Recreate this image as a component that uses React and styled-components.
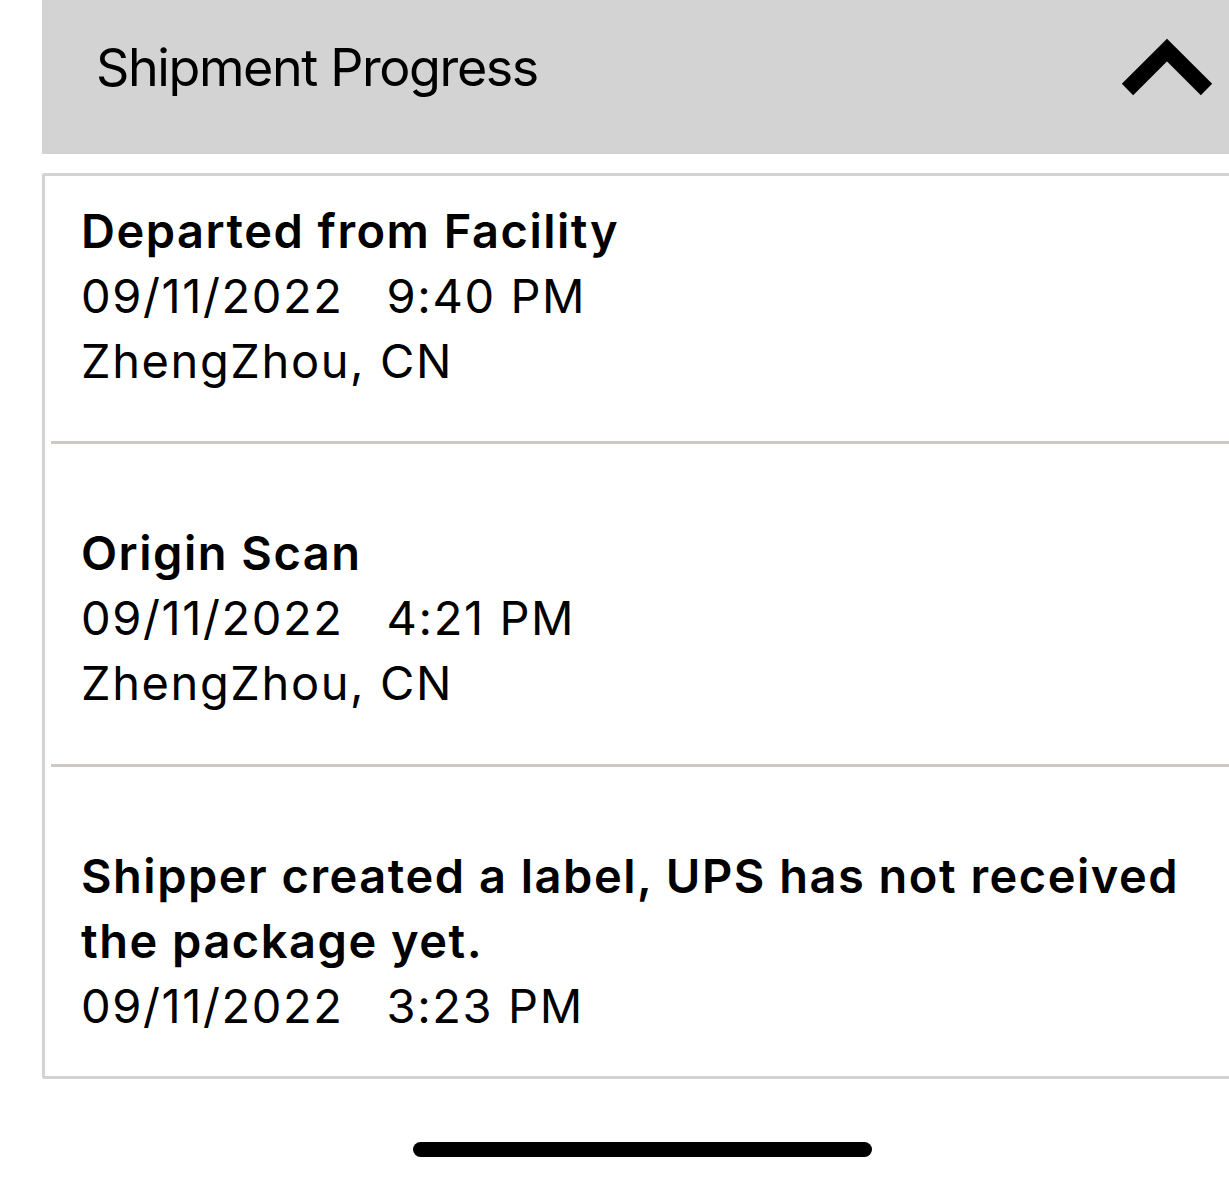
import React from "react";
import styled, { createGlobalStyle } from "styled-components";

const Global = createGlobalStyle`
  html, body {
    margin: 0;
    padding: 0;
    background: #ffffff;
    overflow: hidden;
  }
  body {
    font-family: Inter, "Noto Sans", "Liberation Sans", sans-serif;
    color: #000;
  }
`;

const Page = styled.div`
  padding-left: 42px;
  width: 1229px;
  box-sizing: border-box;
`;

const Header = styled.div`
  height: 154px;
  box-sizing: border-box;
  background: #d3d3d3;
  display: flex;
  align-items: flex-start;
  justify-content: space-between;
  padding: 38px 16px 0 54px;
`;

const HeaderTitle = styled.div`
  font-size: 52px;
  line-height: 60px;
  font-weight: 400;
  letter-spacing: -1.4px;
`;

const Chevron = styled.svg`
  display: block;
  width: 92px;
  height: 60px;
`;

const Card = styled.div`
  margin-top: 19px;
  border: 3px solid #d3d3d3;
  border-right: none;
  border-radius: 3px 0 0 3px;
`;

const Row = styled.div`
  margin-left: 6px;
  padding: ${(p) => p.$top}px 0 ${(p) => p.$bottom}px 30px;
  border-bottom: ${(p) => (p.$last ? "none" : "3px solid #cdc8c4")};
  font-size: 47px;
  line-height: 65px;
  white-space: nowrap;
`;

const Title = styled.div`
  font-weight: 600;
  letter-spacing: 1.5px;
`;

const Line = styled.div`
  display: flex;
  gap: ${(p) => p.$gap || 0}px;
  font-weight: 400;
  letter-spacing: 1.6px;
`;

const HomeBar = styled.div`
  margin: 63px 0 0 371px;
  width: 459px;
  height: 15px;
  border-radius: 8px;
  background: #000;
`;

const events = [
  {
    title: ["Departed from Facility"],
    date: "09/11/2022",
    time: "9:40 PM",
    place: "ZhengZhou, CN",
    top: 22,
    bottom: 48,
  },
  {
    title: ["Origin Scan"],
    date: "09/11/2022",
    time: "4:21 PM",
    place: "ZhengZhou, CN",
    top: 76,
    bottom: 49,
  },
  {
    title: ["Shipper created a label, UPS has not received", "the package yet."],
    date: "09/11/2022",
    time: "3:23 PM",
    top: 76,
    bottom: 38,
  },
];

export default function App() {
  return (
    <>
      <Global />
      <Page>
        <Header>
          <HeaderTitle>Shipment Progress</HeaderTitle>
          <Chevron viewBox="0 0 92 60">
            <polyline
              points="6.5,51.5 46,12 85.5,51.5"
              fill="none"
              stroke="#000"
              strokeWidth="16"
              strokeLinecap="butt"
              strokeLinejoin="miter"
            />
          </Chevron>
        </Header>
        <Card>
          {events.map((e, i) => (
            <Row key={i} $top={e.top} $bottom={e.bottom} $last={i === events.length - 1}>
              <Title>
                {e.title.map((t, j) => (
                  <div key={j}>{t}</div>
                ))}
              </Title>
              <Line $gap={43}>
                <span>{e.date}</span>
                <span>{e.time}</span>
              </Line>
              {e.place && <Line>{e.place}</Line>}
            </Row>
          ))}
        </Card>
        <HomeBar />
      </Page>
    </>
  );
}
